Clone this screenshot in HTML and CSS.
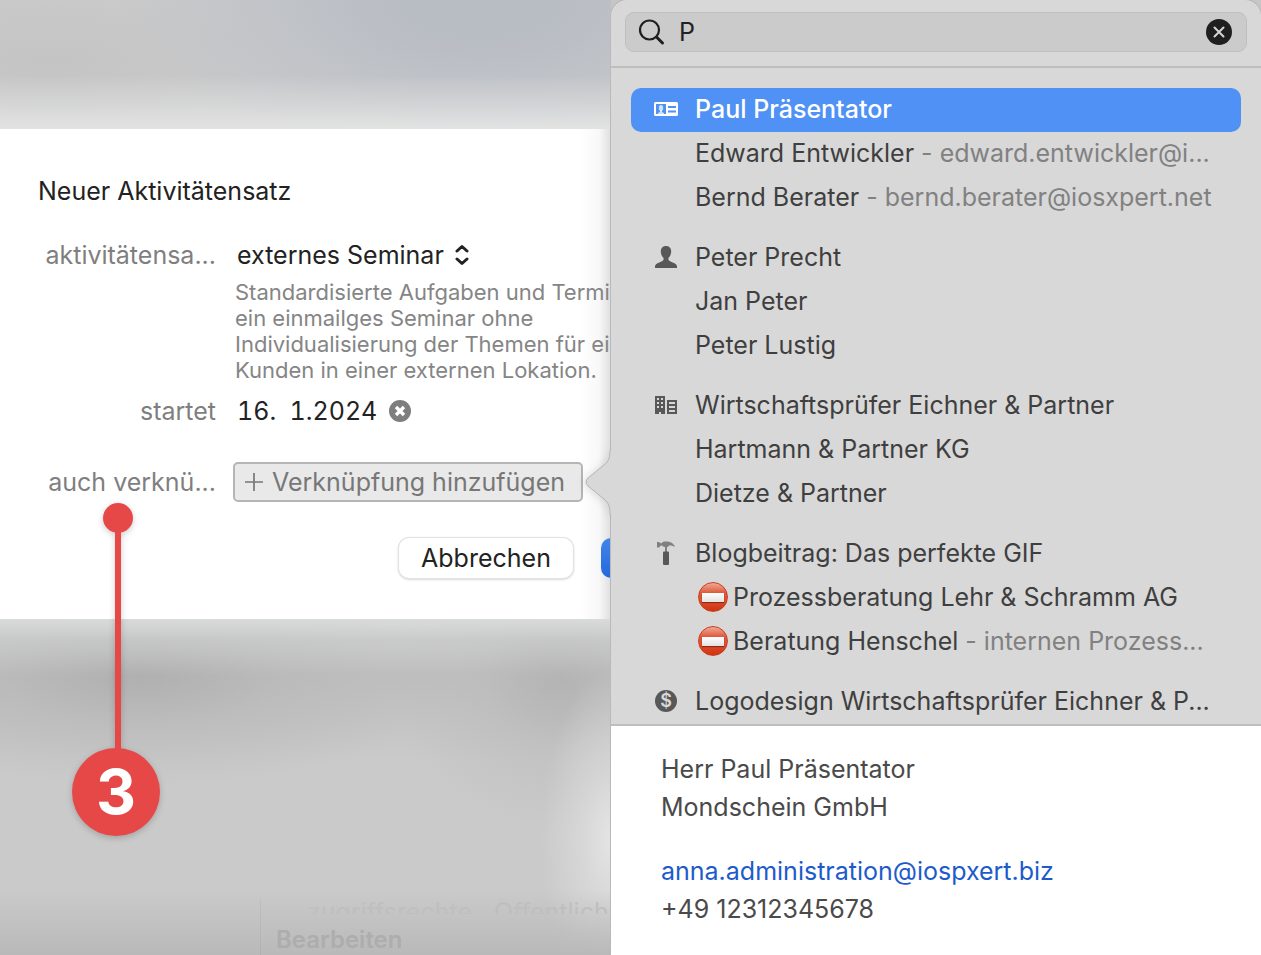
FILE: index.html
```html
<!DOCTYPE html>
<html lang="de">

<head>
    <meta charset="UTF-8">
    <meta name="viewport" content="width=device-width, initial-scale=1.0">
    <title>Neuer Aktivitätensatz</title>
    <link rel="stylesheet" href="styles.css">
</head>

<body>
    <div class="layout">
        <div class="window">
            <form class="dialog">
                <h2 class="dialog-title">Neuer Aktivitätensatz</h2>
                <div class="row">
                    <label for="satz">aktivitätensa...</label>
                    <div class="select-box">
                        <select id="satz" name="satz">
                            <option>externes Seminar</option>
                        </select>
                        <svg class="arrows" width="16" height="22" viewBox="0 0 16 22" fill="none" stroke="#222" stroke-width="3" stroke-linecap="round" stroke-linejoin="round">
                            <path d="M3 7l5-4.500 5 4.500M3 15l5 4.500 5-4.500" />
                        </svg>
                    </div>
                </div>
                <p class="hint">Standardisierte Aufgaben und Termi<br>ein einmailges Seminar ohne<br>Individualisierung der Themen für ei<br>Kunden in einer externen Lokation.</p>
                <div class="row">
                    <label for="start">startet</label>
                    <input type="text" id="start" name="start" class="date" value="16.  1.2024">
                    <button type="button" class="clear-date" aria-label="Datum löschen">
                        <svg width="22" height="22" viewBox="0 0 22 22">
                            <circle cx="11" cy="11" r="11" fill="#7e7e7e" />
                            <path d="M7 7l8 8M15 7l-8 8" stroke="#fff" stroke-width="3.4" />
                        </svg>
                    </button>
                </div>
                <div class="row row-link">
                    <label for="link">auch verknü...</label>
                    <button type="button" id="link" class="add-link">
                        <svg width="18" height="18" viewBox="0 0 18 18" stroke="#777" stroke-width="1.7">
                            <path d="M9 0v18M0 9h18" />
                        </svg>
                        Verknüpfung hinzufügen
                    </button>
                </div>
                <div class="actions">
                    <button type="button" class="cancel">Abbrechen</button>
                    <button type="submit" class="submit" aria-label="OK"></button>
                </div>
            </form>

            <!-- Hintergrund hinter dem Dialog -->
            <div class="behind">
                <p class="rights"><span>zugriffsrechte</span><span>Öffentlich</span></p>
                <p class="edit">Bearbeiten</p>
            </div>

            <div class="callout">
                <div class="callout-stem">
                    <span class="callout-dot"></span>
                    <span class="callout-line"></span>
                </div>
                <span class="callout-number">3</span>
            </div>
        </div>

        <div class="popover">
            <svg class="pointer" width="27" height="64" viewBox="0 0 27 64">
                <path d="M27 0H25C25 7 24 11 19 15L3 28Q-1 32 3 36L19 49C24 53 25 57 25 64H27Z" fill="#d8d8d8" />
                <path d="M25 0C25 7 24 11 19 15L3 28Q-1 32 3 36L19 49C24 53 25 57 25 64" fill="none" stroke="#b4b4b4" />
            </svg>
            <div class="search">
                <div class="search-box">
                    <svg width="28" height="28" viewBox="0 0 28 28" fill="none" stroke="#1f1f1f" stroke-linecap="round">
                        <circle cx="11.500" cy="12" r="9.500" stroke-width="2.200" />
                        <path d="M18.500 19l6 6" stroke-width="3" />
                    </svg>
                    <input type="text" aria-label="Suchen" value="P">
                    <button type="button" aria-label="Suche löschen">
                        <svg width="26" height="26" viewBox="0 0 26 26">
                            <circle cx="13" cy="13" r="13" fill="#1f1f1f" />
                            <path d="M8.500 8.500l9 9M17.500 8.500l-9 9" stroke="#d4d4d4" stroke-width="2" stroke-linecap="round" />
                        </svg>
                    </button>
                </div>
            </div>

            <div class="results">
                <ul>
                    <li class="selected">
                        <svg class="icon" width="24" height="24" viewBox="0 0 24 24">
                            <rect y="5" width="24" height="14" rx="1.500" fill="#fff" />
                            <path d="M2 7h10v10H2z" fill="#4f91f4" />
                            <ellipse cx="7" cy="11" rx="2.200" ry="3" fill="#fff" opacity=".75" />
                            <path d="M6 13h2v2l2 1v1H4v-1l2-1z" fill="#fff" opacity=".75" />
                            <path d="M14 10h8M14 14.500h8" stroke="#4f91f4" stroke-width="2" />
                        </svg>
                        <span>Paul Präsentator</span>
                    </li>
                    <li><span>Edward Entwickler <small>- edward.entwickler@i...</small></span></li>
                    <li><span>Bernd Berater <small>- bernd.berater@iosxpert.net</small></span></li>
                </ul>
                <ul>
                    <li>
                        <svg class="icon" width="24" height="24" viewBox="0 0 24 24" fill="#585858">
                            <path d="M12 1C8.800 1 6.800 3.200 6.800 6.300c0 3 1.200 5.200 2.800 6.700v1.200c0 1.500-2 2.300-4.300 3.200C2.500 18.500 1 19.500 1 21.500V23h22v-1.500c0-2-1.500-3-4.300-4.100-2.300-.9-4.300-1.700-4.300-3.200V13c1.600-1.500 2.800-3.700 2.800-6.700C17.200 3.200 15.200 1 12 1z" />
                        </svg>
                        <span>Peter Precht</span>
                    </li>
                    <li><span>Jan Peter</span></li>
                    <li><span>Peter Lustig</span></li>
                </ul>
                <ul>
                    <li>
                        <svg class="icon" width="24" height="24" viewBox="0 0 24 24">
                            <path d="M1 3h10v18H7v-2H5v2H1zM13 7h10v14H13z" fill="#585858" />
                            <path d="M3 6h2M7 6h2M3 10h2M7 10h2M3 14h2M7 14h2M15 10h6M15 14h6M15 18h6" stroke="#d8d8d8" stroke-width="2" />
                        </svg>
                        <span>Wirtschaftsprüfer Eichner &amp; Partner</span>
                    </li>
                    <li><span>Hartmann &amp; Partner KG</span></li>
                    <li><span>Dietze &amp; Partner</span></li>
                </ul>
                <ul>
                    <li>
                        <svg class="icon" width="24" height="24" viewBox="0 0 24 24">
                            <path d="M3 1h2l2 1.500C8.500.8 10 .5 12 .5c4.500 0 7.500 1.500 9 5.500-2.500-1.500-4.500-1.700-6-1.500-.5 1-1.200 1.500-2 1.500V11h-2V6c-1 0-2-.5-3-1.500H7L5 6.500H3z" fill="#808080" />
                            <rect x="9" y="10.500" width="6" height="13.500" rx="1" fill="#585858" />
                        </svg>
                        <span>Blogbeitrag: Das perfekte GIF</span>
                    </li>
                    <li><i class="stop"></i><span>Prozessberatung Lehr &amp; Schramm AG</span></li>
                    <li><i class="stop"></i><span>Beratung Henschel <small>- internen Prozess...</small></span></li>
                </ul>
                <ul>
                    <li>
                        <span class="icon coin">$</span>
                        <span>Logodesign Wirtschaftsprüfer Eichner &amp; P...</span>
                    </li>
                </ul>
            </div>

            <div class="details">
                <p>Herr Paul Präsentator<br>Mondschein GmbH</p>
                <p><a href="mailto:anna.administration@iospxert.biz">anna.administration@iospxert.biz</a><br>+49 12312345678</p>
            </div>
        </div>
    </div>
</body>

</html>
```
FILE: styles.css
```css
* {
    box-sizing: border-box;
}

body {
    margin: 0;
    font-family: Inter, "Liberation Sans", sans-serif;
    font-size: 25px;
    color: #222;
    background: #c6c6c6;
    overflow: hidden;
}

h2,
p,
ul {
    margin: 0;
    padding: 0;
}

input,
select,
button {
    font: inherit;
    color: inherit;
    border: none;
    background: none;
    padding: 0;
    margin: 0;
}

svg {
    flex: none;
    display: block;
}

.layout {
    display: grid;
    grid-template-columns: minmax(0, 611fr) minmax(0, 650fr);
    min-height: 100vh;
}

/* Fenster mit Dialog */
.window {
    position: relative;
    display: flex;
    flex-direction: column;
    padding-top: 129px;
    background:
        linear-gradient(to top, #b9b9b9, rgba(190, 190, 190, 0) 65px),
        radial-gradient(ellipse 70px 170px at 100% 840px, #e4e4e4, rgba(228, 228, 228, 0.5) 40%, rgba(228, 228, 228, 0)),
        linear-gradient(to bottom, rgba(224, 225, 225, 0) 75px, rgba(226, 227, 227, 0.5) 105px, #e3e3e3 129px, #d9dbda 619px, rgba(205, 207, 206, 0.6) 640px, rgba(200, 200, 200, 0) 675px),
        radial-gradient(ellipse 320px 110px at 140px 676px, #b0b0b0, rgba(184, 184, 184, 0.6) 45%, rgba(196, 196, 196, 0)),
        radial-gradient(ellipse 170px 150px at 560px 680px, #b4b4b4, rgba(186, 186, 186, 0.5) 45%, rgba(196, 196, 196, 0)),
        linear-gradient(to bottom, rgba(190, 190, 190, 0) 619px, #bfbfbf 675px, rgba(198, 198, 198, 0) 760px),
        radial-gradient(ellipse 360px 170px at 480px 0, #b8bcc3 20%, rgba(188, 192, 199, 0.7) 55%, rgba(200, 202, 205, 0)),
        radial-gradient(ellipse 220px 70px at 50px 60px, #c4c4c4, rgba(196, 196, 196, 0)),
        #cacaca;
}

.dialog {
    padding: 42px 0 41px 38px;
    overflow: hidden;
    background: linear-gradient(to left, #dedede, #f8f8f8 12px, #fff 32px);
}

.dialog-title {
    font-size: 25px;
    font-weight: 400;
    line-height: 40px;
    margin-bottom: 24px;
}

.row {
    display: flex;
    align-items: center;
    height: 40px;
}

.row label {
    flex: none;
    width: 178px;
    margin-right: 17px;
    text-align: right;
    color: #7f7f7f;
}

.row-link {
    margin-top: 31px;
}

.select-box {
    display: flex;
    align-items: center;
    gap: 10px;
    padding-left: 4px;
}

.select-box select {
    appearance: none;
    field-sizing: content;
}

.hint {
    margin: 4px 0 8px 197px;
    font-size: 22px;
    line-height: 26px;
    white-space: nowrap;
    color: #858585;
}

.date {
    width: 140px;
    margin: 0 12px 0 4px;
    font-variant-numeric: tabular-nums;
}

.add-link {
    display: flex;
    align-items: center;
    gap: 9px;
    height: 40px;
    padding: 0 16px 0 10px;
    border: 2px solid #b5b5b5;
    border-radius: 5px;
    background: #e9e9e9;
    color: #777;
    white-space: nowrap;
}

.actions {
    display: flex;
    gap: 28px;
    margin: 36px 0 0 361px;
}

.cancel {
    flex: none;
    width: 174px;
    height: 40px;
    border-radius: 10px;
    background: #fff;
    box-shadow: 0 0 0 1px #e2e2e2, 0 1px 3px rgba(0, 0, 0, 0.3);
}

.submit {
    flex: none;
    width: 100px;
    height: 40px;
    border-radius: 10px;
    background: linear-gradient(#4285e8, #2468dd);
}

/* Text, der durchscheint */
.behind {
    width: 351px;
    margin: auto 0 0 260px;
    border-left: 1px solid rgba(0, 0, 0, 0.04);
    padding-left: 15px;
    white-space: nowrap;
    overflow: hidden;
}

.rights {
    display: flex;
    gap: 22px;
    height: 15px;
    margin-left: 31px;
    line-height: 26px;
    font-size: 25px;
    color: #bfbfbf;
    overflow: hidden;
}

.edit {
    font-size: 24px;
    font-weight: 600;
    line-height: 30px;
    margin-top: 11px;
    color: #adadad;
}

/* Markierung */
.callout {
    position: absolute;
    top: 503px;
    left: 72px;
    display: flex;
    flex-direction: column;
    align-items: center;
    filter: drop-shadow(0 2px 3px rgba(0, 0, 0, 0.2));
}

.callout-stem {
    display: flex;
    flex-direction: column;
    align-items: center;
    padding-left: 4px;
}

.callout-dot {
    width: 30px;
    height: 30px;
    border-radius: 50%;
    background: #e64848;
}

.callout-line {
    width: 6px;
    height: 217px;
    margin: -1px 0;
    background: #e64848;
}

.callout-number {
    width: 88px;
    height: 88px;
    border-radius: 50%;
    background: #e64848;
    color: #fff;
    font-size: 62px;
    font-weight: 700;
    line-height: 88px;
    text-align: center;
}

/* Popover */
.popover {
    position: relative;
    display: flex;
    flex-direction: column;
    border-radius: 16px 16px 0 0;
    background: #d8d8d8;
    box-shadow: 0 0 0 1px #b9b9b9;
}

.pointer {
    position: absolute;
    top: 450px;
    left: -26px;
    filter: drop-shadow(-2px 1px 4px rgba(0, 0, 0, 0.12));
    clip-path: inset(-10px 0 -10px -10px);
}

.search {
    padding: 12px 14px 14px;
    border-bottom: 2px solid #bebebe;
}

.search-box {
    display: flex;
    align-items: center;
    height: 40px;
    padding: 0 14px 0 12px;
    border: 1px solid #bfbfbf;
    border-radius: 9px;
    background: #cbcbcb;
}

.search-box input {
    flex: 1;
    min-width: 0;
    margin-left: 13px;
    outline: none;
}

.results {
    display: flex;
    flex-direction: column;
    gap: 16px;
    padding: 20px 20px 0;
    border-bottom: 2px solid #bebebe;
    color: #3f3f3f;
}

.results ul {
    list-style: none;
}

.results li {
    display: flex;
    align-items: center;
    height: 44px;
    padding: 0 0 2px 64px;
    white-space: nowrap;
}

.results .selected {
    background: #4f91f4;
    color: #fff;
    font-weight: 500;
    border-radius: 10px;
}

.results small {
    font-size: 25px;
    color: #818181;
}

.icon {
    width: 24px;
    margin: 0 17px 0 -41px;
}

.coin {
    width: 22px;
    height: 22px;
    margin: 0 18px 0 -40px;
    border-radius: 50%;
    background: #585858;
    color: #d8d8d8;
    font-size: 18px;
    font-weight: 600;
    line-height: 22px;
    text-align: center;
}

/* Einfahrt-verboten-Zeichen */
.stop {
    display: flex;
    align-items: center;
    justify-content: center;
    width: 30px;
    height: 30px;
    margin: 0 5px 0 3px;
    border: 1px solid #c9401f;
    border-radius: 50%;
    background: linear-gradient(#f0aa98, #dd5a3c 35%, #e0502f 60%, #cf3311);
}

.stop::before {
    content: "";
    width: 22px;
    height: 9px;
    background: linear-gradient(#fff, #e2e2e2);
    box-shadow: 0 1px 1px #8c2a14;
}

.details {
    flex: 1;
    padding: 24px 24px 24px 50px;
    background: #fff;
    color: #4a4a4a;
    line-height: 38px;
}

.details p + p {
    margin-top: 26px;
}

.details a {
    color: #1d5bcb;
    text-decoration: none;
}
```
